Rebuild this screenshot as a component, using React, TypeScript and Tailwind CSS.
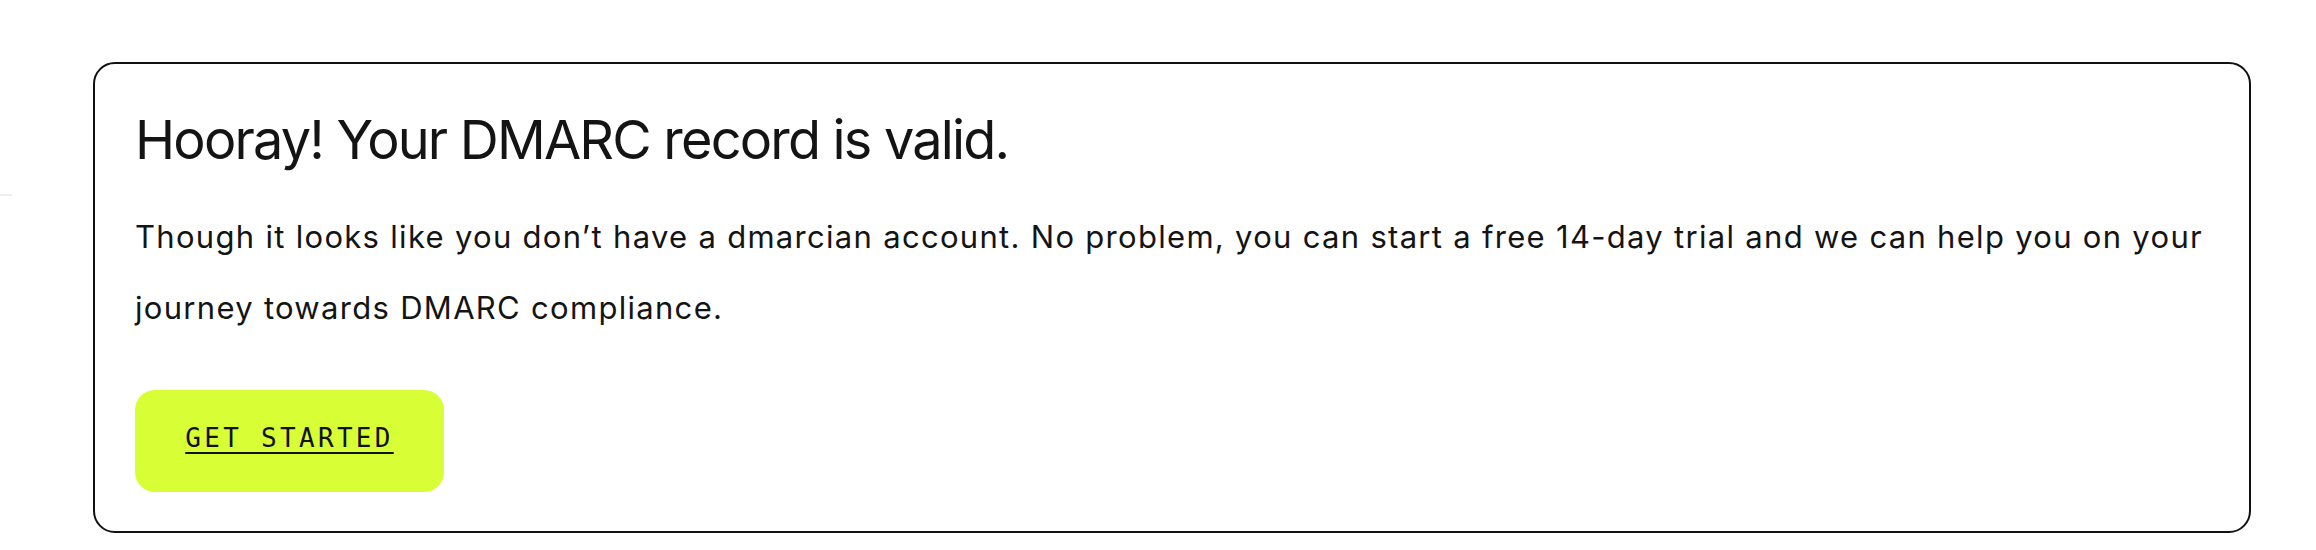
import React from "react";

export default function App() {
  return (
    <div className="relative w-[2316px] h-[550px] bg-white font-['Inter',sans-serif] text-[#141414]">
      {/* stray divider fragment at the far left */}
      <div className="absolute left-0 top-[194px] w-[12px] h-[2px] bg-[#eeeeee]" />

      <div className="pt-[62px] pl-[93px]">
        <div className="w-[2158px] h-[471px] rounded-[22px] border-2 border-[#111] px-[40px] pt-[43px] flex flex-col items-start">
          <h1 className="text-[54px] leading-[65px] tracking-[-1.8px] font-normal">
            Hooray! Your DMARC record is valid.
          </h1>
          <p className="mt-[29px] text-[31px] leading-[71px] tracking-[1.3px]">
            Though it looks like you don’t have a dmarcian account. No problem, you can start a free 14-day trial and we can help you on your journey towards DMARC compliance.
          </p>
          <button className="mt-[47px] w-[309px] h-[102px] rounded-[20px] bg-[#d8ff35] flex items-center justify-center pb-[6px]">
            <span className="font-['DejaVu_Sans_Mono',monospace] text-[26px] tracking-[3.3px] uppercase underline decoration-2 underline-offset-[5px] text-[#111]">
              Get Started
            </span>
          </button>
        </div>
      </div>
    </div>
  );
}
